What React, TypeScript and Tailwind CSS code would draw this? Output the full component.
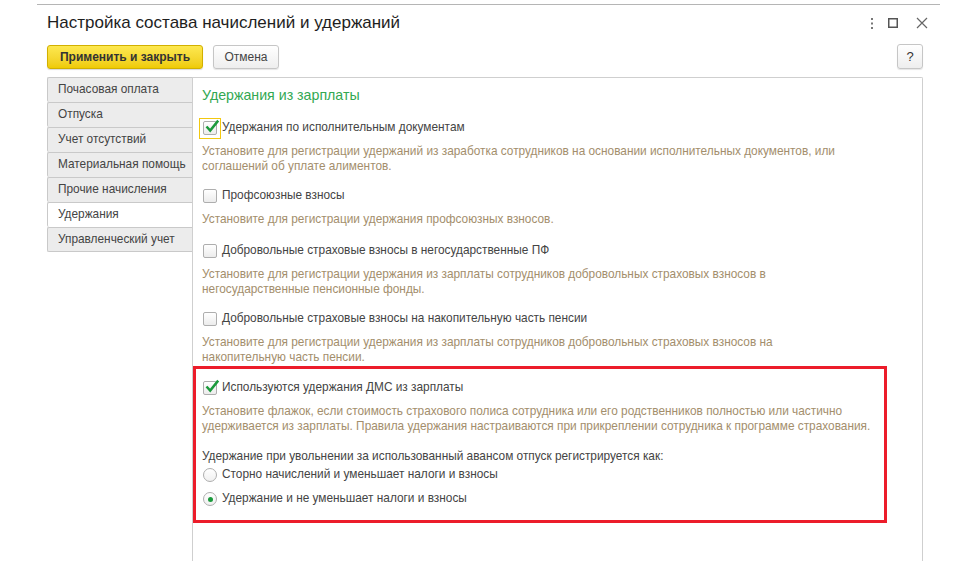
import React from "react";

function CheckBox({ checked, focused }: { checked?: boolean; focused?: boolean }) {
  return (
    <span className="relative inline-flex w-[14px] h-[14px] shrink-0">
      {focused && (
        <span className="absolute left-[-4px] top-[-3px] w-[22px] h-[21px] border-[1.5px] border-[#f2c811]" />
      )}
      <span className="absolute inset-0 rounded-[2px] border border-[#aeaeae] bg-gradient-to-b from-white to-[#ececec]" />
      {checked && (
        <svg className="absolute left-[0px] top-[-3px]" width="17" height="16" viewBox="0 0 17 16">
          <path d="M3.5 8.5 L7.2 12.6 L15.2 2.6" fill="none" stroke="#1b9a3c" strokeWidth="2.5" strokeLinejoin="miter" strokeLinecap="butt" />
        </svg>
      )}
    </span>
  );
}

function Radio({ checked }: { checked?: boolean }) {
  return (
    <span className="relative inline-flex w-[14px] h-[14px] shrink-0 rounded-full border border-[#aeaeae] bg-gradient-to-b from-white to-[#f0f0f0] items-center justify-center">
      {checked && <span className="w-[5px] h-[5px] rounded-full bg-[#1b9a3c]" />}
    </span>
  );
}

function CbRow({ label, checked, focused }: { label: string; checked?: boolean; focused?: boolean }) {
  return (
    <div className="flex items-center h-[20px] pl-[1px] gap-[5px] text-[#444]">
      <CheckBox checked={checked} focused={focused} />
      <span>{label}</span>
    </div>
  );
}

function Desc({ children }: { children: React.ReactNode }) {
  return <div className="mt-[6px] leading-[15px] text-[#a38e6c]">{children}</div>;
}

const tabs = [
  "Почасовая оплата",
  "Отпуска",
  "Учет отсутствий",
  "Материальная помощь",
  "Прочие начисления",
  "Удержания",
  "Управленческий учет",
];

export default function App() {
  return (
    <div className="w-[965px] h-[561px] bg-white overflow-hidden font-['Liberation_Sans',Arial,sans-serif] text-[11.85px] text-[#444]">
      <div className="ml-[37px] mt-[4px] w-[903px] h-px bg-[#b5b5b5]" />
      <div className="flex items-center h-[36px] pl-[47px]">
        <h1 className="flex-1 text-[17px] text-[#1e1e1e] font-normal">Настройка состава начислений и удержаний</h1>
        <div className="flex items-center mr-[37px]">
          <svg width="4" height="11" viewBox="0 0 4 11" className="mr-[14px]">
            <rect x="1" y="0" width="2" height="2" fill="#777" />
            <rect x="1" y="4.5" width="2" height="2" fill="#777" />
            <rect x="1" y="9" width="2" height="2" fill="#777" />
          </svg>
          <svg width="10" height="10" viewBox="0 0 10 10" className="mr-[18px]">
            <rect x="0.75" y="0.75" width="8.5" height="8.5" fill="none" stroke="#555" strokeWidth="1.5" />
          </svg>
          <svg width="12" height="12" viewBox="0 0 12 12">
            <path d="M1 1 L11 11 M11 1 L1 11" stroke="#666" strokeWidth="1.2" />
          </svg>
        </div>
      </div>
      <div className="flex items-center mt-[3px] h-[25px] pl-[47px] pr-[42px]">
        <button className="h-[24px] w-[156px] rounded-[3px] border border-[#d2b000] bg-gradient-to-b from-[#fde84e] to-[#efcb00] font-bold text-[12px] text-[#333] shadow-[0_1px_1px_rgba(0,0,0,0.15)]">
          Применить и закрыть
        </button>
        <button className="ml-[10px] h-[24px] w-[66px] rounded-[3px] border border-[#c6c6c6] bg-gradient-to-b from-white to-[#eeeeee] text-[12px] text-[#444] shadow-[0_1px_1px_rgba(0,0,0,0.1)]">
          Отмена
        </button>
        <button className="ml-auto h-[25px] w-[26px] rounded-[3px] border border-[#c6c6c6] bg-gradient-to-b from-white to-[#eeeeee] text-[13px] text-[#333] shadow-[0_1px_1px_rgba(0,0,0,0.1)]">
          ?
        </button>
      </div>
      <div className="flex mt-[8px] pl-[47px]">
        <div className="w-[145px] flex flex-col">
          {tabs.map((t, i) => (
            <div
              key={t}
              className={
                "h-[25px] flex items-center pl-[10px] border-l border-t border-[#c9c9c9] rounded-l-[2px] text-[#444] " +
                (t === "Удержания" ? "bg-white " : "bg-[#ececec] ") +
                (i === tabs.length - 1 ? "border-b" : "")
              }
            >
              {t}
            </div>
          ))}
        </div>
        <div className="w-[731px] h-[484px] border border-b-0 border-[#cfcfcf] rounded-tr-[2px]">
          <div className="pl-[9px] pt-[8px]">
            <div className="h-[20px] flex items-center text-[14.2px] text-[#32a852]">Удержания из зарплаты</div>
            <div className="mt-[12px]">
              <CbRow label="Удержания по исполнительным документам" checked focused />
              <Desc>
                Установите для регистрации удержаний из заработка сотрудников на основании исполнительных документов, или
                <br />
                соглашений об уплате алиментов.
              </Desc>
            </div>
            <div className="mt-[12px]">
              <CbRow label="Профсоюзные взносы" />
              <Desc>Установите для регистрации удержания профсоюзных взносов.</Desc>
            </div>
            <div className="mt-[14px]">
              <CbRow label="Добровольные страховые взносы в негосударственные ПФ" />
              <Desc>
                Установите для регистрации удержания из зарплаты сотрудников добровольных страховых взносов в
                <br />
                негосударственные пенсионные фонды.
              </Desc>
            </div>
            <div className="mt-[12px]">
              <CbRow label="Добровольные страховые взносы на накопительную часть пенсии" />
              <Desc>
                Установите для регистрации удержания из зарплаты сотрудников добровольных страховых взносов на
                <br />
                накопительную часть пенсии.
              </Desc>
            </div>
          </div>
          <div className="mt-[1px] w-[694px] border-[3px] border-[#ec1c2a] pl-[6px] pt-[9px] pb-[11px]">
            <CbRow label="Используются удержания ДМС из зарплаты" checked />
            <Desc>
              Установите флажок, если стоимость страхового полиса сотрудника или его родственников полностью или частично
              <br />
              удерживается из зарплаты. Правила удержания настраиваются при прикреплении сотрудника к программе страхования.
            </Desc>
            <div className="mt-[15px] h-[16px] flex items-center text-[#444]">
              Удержание при увольнении за использованный авансом отпуск регистрируется как:
            </div>
            <div className="flex items-center h-[20px] pl-[1px] gap-[5px]">
              <Radio />
              <span>Сторно начислений и уменьшает налоги и взносы</span>
            </div>
            <div className="mt-[4px] flex items-center h-[20px] pl-[1px] gap-[5px]">
              <Radio checked />
              <span>Удержание и не уменьшает налоги и взносы</span>
            </div>
          </div>
        </div>
      </div>
    </div>
  );
}
